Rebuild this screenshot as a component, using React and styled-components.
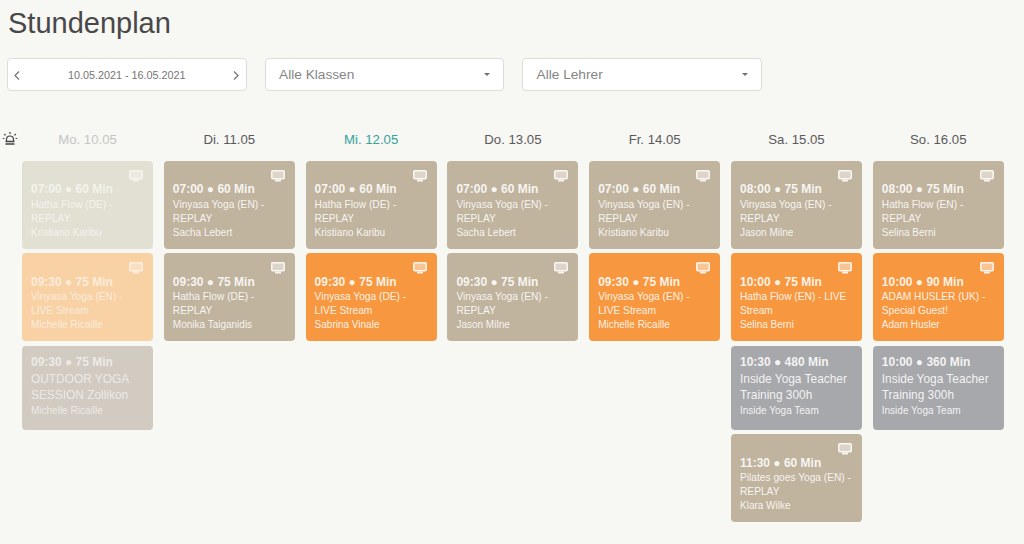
import React from "react";
import styled, { createGlobalStyle } from "styled-components";

const Global = createGlobalStyle`
  html, body { margin: 0; padding: 0; background: #f7f7f4; }
  body { font-family: "Liberation Sans", Arial, sans-serif; width: 1024px; height: 544px; overflow: hidden; }
`;

const Page = styled.div`
  display: flex;
  flex-direction: column;
  height: 544px;
  overflow: hidden;
`;
const Title = styled.h1`
  margin: 6px 0 0 8px;
  height: 34px;
  font-size: 29px;
  line-height: 34px;
  font-weight: 400;
  color: #484848;
`;
const Filters = styled.div`
  display: flex;
  gap: 18px;
  margin: 18px 0 0 7px;
`;
const Field = styled.div`
  box-sizing: border-box;
  width: 239.5px;
  height: 33px;
  display: flex;
  align-items: center;
  justify-content: space-between;
  background: #fff;
  border: 1px solid #dcdcd8;
  border-radius: 4px;
`;
const DateField = styled(Field)`
  padding: 0 3px 0 3px;
  font-size: 10.8px;
  color: #757575;
`;
const SelectField = styled(Field)`
  padding: 0 13px 0 13.5px;
  font-size: 13.7px;
  color: #858585;
`;
const Caret = styled.span`
  width: 0;
  height: 0;
  border-left: 3.5px solid transparent;
  border-right: 3.5px solid transparent;
  border-top: 3.5px solid #707070;
`;
const Schedule = styled.div`
  display: flex;
  margin-top: 38px;
`;
const Gutter = styled.div`
  width: 22px;
  flex: none;
  padding: 2px 0 0 2px;
  box-sizing: border-box;
`;
const Grid = styled.div`
  display: grid;
  grid-template-columns: repeat(7, 131px);
  column-gap: 10.8px;
`;
const Column = styled.div`
  display: flex;
  flex-direction: column;
  gap: 4.5px;
`;
const DayHead = styled.div`
  height: 27px;
  line-height: 21px;
  text-align: center;
  font-size: 13.2px;
  color: ${p => (p.$state === "past" ? "#c6c6c4" : p.$state === "today" ? "#35a29c" : "#5a5a5a")};
`;
const palette = {
  beige: "#c1b49e",
  orange: "#f79840",
  grey: "#a7a8ab",
  fadedBeige: "#e2dfd3",
  fadedOrange: "#f8d1a5",
  fadedOutdoor: "#d1cbc1",
};
const Card = styled.div`
  position: relative;
  box-sizing: border-box;
  height: ${p => (p.$big ? 84 : 88)}px;
  padding: ${p => (p.$big ? 9 : 21.5)}px 9px 0;
  background: ${p => palette[p.$tone]};
  border-radius: 4px;
  color: ${p => (p.$faded ? "rgba(255,255,255,.62)" : "rgba(255,255,255,.88)")};
`;
const Time = styled.div`
  font-size: 12px;
  line-height: 15px;
  font-weight: 700;
`;
const Name = styled.div`
  font-size: ${p => (p.$big ? 11.9 : 10.2)}px;
  line-height: ${p => (p.$big ? 16.5 : 14)}px;
  margin-top: ${p => (p.$big ? 1 : 0.5)}px;
`;
const Teacher = styled.div`
  font-size: 10px;
  line-height: 14px;
`;
const ScreenIcon = styled.svg`
  position: absolute;
  top: 9px;
  right: 10px;
  width: 14px;
  height: 12px;
`;

const Screen = () => (
  <ScreenIcon viewBox="0 0 14 12" fill="none">
    <rect x="0.75" y="0.75" width="12.5" height="8" rx="1" fill="currentColor" fillOpacity="0.5" stroke="currentColor" strokeWidth="1.5" />
    <rect x="4" y="9.5" width="6" height="2" rx="0.6" fill="currentColor" />
  </ScreenIcon>
);
const Chevron = ({ dir }) => (
  <svg width="12" height="14" viewBox="0 0 12 14" fill="none" stroke="#777" strokeWidth="1.3">
    <path d={dir === "l" ? "M8 3.5 L4 7.5 L8 11.5" : "M4 3.5 L8 7.5 L4 11.5"} />
  </svg>
);
const Alarm = () => (
  <svg width="16" height="16" viewBox="0 0 16 16" fill="none" stroke="#444" strokeWidth="1.2">
    <path d="M4.5 10 V8.5 a3.5 3.5 0 0 1 7 0 V10" />
    <path d="M3.5 10.5 H12.5 M3.5 13 H12.5" strokeWidth="1.6" />
    <path d="M8 1 V3 M2.2 3 L3.6 4.4 M13.8 3 L12.4 4.4 M0.8 7.5 H2.4 M13.6 7.5 H15.2" />
  </svg>
);

const R = "REPLAY";
const c = (time, name, teacher, tone = "beige", screen = true, big = false) => ({ time, name, teacher, tone, screen, big });
const days = [
  { label: "Mo. 10.05", state: "past", cards: [
    c("07:00 ● 60 Min", `Hatha Flow (DE) - ${R}`, "Kristiano Karibu", "fadedBeige"),
    c("09:30 ● 75 Min", "Vinyasa Yoga (EN) - LIVE Stream", "Michelle Ricaille", "fadedOrange"),
    c("09:30 ● 75 Min", "OUTDOOR YOGA SESSION Zollikon", "Michelle Ricaille", "fadedOutdoor", false, true),
  ]},
  { label: "Di. 11.05", cards: [
    c("07:00 ● 60 Min", `Vinyasa Yoga (EN) - ${R}`, "Sacha Lebert"),
    c("09:30 ● 75 Min", `Hatha Flow (DE) - ${R}`, "Monika Taiganidis"),
  ]},
  { label: "Mi. 12.05", state: "today", cards: [
    c("07:00 ● 60 Min", `Hatha Flow (DE) - ${R}`, "Kristiano Karibu"),
    c("09:30 ● 75 Min", "Vinyasa Yoga (DE) - LIVE Stream", "Sabrina Vinale", "orange"),
  ]},
  { label: "Do. 13.05", cards: [
    c("07:00 ● 60 Min", `Vinyasa Yoga (EN) - ${R}`, "Sacha Lebert"),
    c("09:30 ● 75 Min", `Vinyasa Yoga (EN) - ${R}`, "Jason Milne"),
  ]},
  { label: "Fr. 14.05", cards: [
    c("07:00 ● 60 Min", `Vinyasa Yoga (EN) - ${R}`, "Kristiano Karibu"),
    c("09:30 ● 75 Min", "Vinyasa Yoga (EN) - LIVE Stream", "Michelle Ricaille", "orange"),
  ]},
  { label: "Sa. 15.05", cards: [
    c("08:00 ● 75 Min", `Vinyasa Yoga (EN) - ${R}`, "Jason Milne"),
    c("10:00 ● 75 Min", "Hatha Flow (EN) - LIVE Stream", "Selina Berni", "orange"),
    c("10:30 ● 480 Min", "Inside Yoga Teacher Training 300h", "Inside Yoga Team", "grey", false, true),
    c("11:30 ● 60 Min", `Pilates goes Yoga (EN) - ${R}`, "Klara Wilke"),
  ]},
  { label: "So. 16.05", cards: [
    c("08:00 ● 75 Min", `Hatha Flow (EN) - ${R}`, "Selina Berni"),
    c("10:00 ● 90 Min", "ADAM HUSLER (UK) - Special Guest!", "Adam Husler", "orange"),
    c("10:00 ● 360 Min", "Inside Yoga Teacher Training 300h", "Inside Yoga Team", "grey", false, true),
  ]},
];

export default function App() {
  return (
    <Page>
      <Global />
      <Title>Stundenplan</Title>
      <Filters>
        <DateField>
          <Chevron dir="l" />
          <span>10.05.2021 - 16.05.2021</span>
          <Chevron dir="r" />
        </DateField>
        <SelectField><span>Alle Klassen</span><Caret /></SelectField>
        <SelectField><span>Alle Lehrer</span><Caret /></SelectField>
      </Filters>
      <Schedule>
        <Gutter><Alarm /></Gutter>
        <Grid>
          {days.map(d => (
            <Column key={d.label}>
              <DayHead $state={d.state}>{d.label}</DayHead>
              {d.cards.map(k => (
                <Card key={k.time + k.name} $tone={k.tone} $big={k.big} $faded={d.state === "past"}>
                  {k.screen && <Screen />}
                  <Time>{k.time}</Time>
                  <Name $big={k.big}>{k.name}</Name>
                  <Teacher>{k.teacher}</Teacher>
                </Card>
              ))}
            </Column>
          ))}
        </Grid>
      </Schedule>
    </Page>
  );
}
